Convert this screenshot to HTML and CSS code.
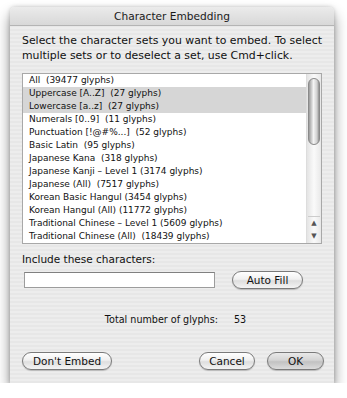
FILE: index.html
```html
<!DOCTYPE html>
<html lang="en">

<head>
  <meta charset="UTF-8" />
  <meta name="viewport" content="width=device-width, initial-scale=1.0" />
  <title>Character Embedding</title>
  <link rel="stylesheet" href="styles.css">
</head>

<body>
  <div class="dialog">
    <div class="titlebar">Character Embedding</div>
    <div class="content">
      <p class="intro">Select the character sets you want to embed. To select<br>multiple sets or to deselect a set, use Cmd+click.</p>

      <div class="listbox">
        <ul class="sets">
          <li>All&nbsp; (39477 glyphs)</li>
          <li class="selected">Uppercase [A..Z]&nbsp; (27 glyphs)</li>
          <li class="selected">Lowercase [a..z]&nbsp; (27 glyphs)</li>
          <li>Numerals [0..9]&nbsp; (11 glyphs)</li>
          <li>Punctuation [!@#%...]&nbsp; (52 glyphs)</li>
          <li>Basic Latin&nbsp; (95 glyphs)</li>
          <li>Japanese Kana&nbsp; (318 glyphs)</li>
          <li>Japanese Kanji – Level 1 (3174 glyphs)</li>
          <li>Japanese (All)&nbsp; (7517 glyphs)</li>
          <li>Korean Basic Hangul (3454 glyphs)</li>
          <li>Korean Hangul (All) (11772 glyphs)</li>
          <li>Traditional Chinese – Level 1 (5609 glyphs)</li>
          <li>Traditional Chinese (All)&nbsp; (18439 glyphs)</li>
        </ul>
        <div class="scrollbar">
          <div class="thumb"></div>
          <div class="track"></div>
          <div class="arrows">
            <span>▲</span>
            <span>▼</span>
          </div>
        </div>
      </div>

      <p class="label">Include these characters:</p>
      <div class="include-row">
        <div class="field"></div>
        <button class="aqua autofill">Auto Fill</button>
      </div>

      <div class="total">
        <span>Total number of glyphs:</span>
        <span class="count">53</span>
      </div>

      <div class="actions">
        <button class="aqua dont">Don't Embed</button>
        <div class="right-buttons">
          <button class="aqua cancel">Cancel</button>
          <button class="aqua ok">OK</button>
        </div>
      </div>
    </div>
  </div>
</body>

</html>
```

FILE: styles.css
```css
* {
  box-sizing: border-box;
}

body {
  margin: 0;
  background: #fff;
  font-family: "DejaVu Sans", "Noto Sans", sans-serif;
  color: #111;
}

.dialog {
  width: 324px;
  height: 376px;
  margin: 7px 0 0 10px;
  border-radius: 5px 5px 0 0;
  background: repeating-linear-gradient(#ededed 0, #ededed 2px, #e7e7e7 2px, #e7e7e7 4px);
  box-shadow: 0 8px 14px rgba(0, 0, 0, 0.45), 0 0 4px rgba(0, 0, 0, 0.2);
  display: flex;
  flex-direction: column;
}

.titlebar {
  height: 19px;
  border-radius: 5px 5px 0 0;
  background: linear-gradient(#ebebeb, #d8d8d8);
  border-bottom: 1px solid #b4b4b4;
  text-align: center;
  font-size: 10.6px;
  line-height: 18px;
  color: #1a1a1a;
}

.content {
  padding: 7px 10px 0 12px;
  display: flex;
  flex-direction: column;
}

.intro {
  margin: 0;
  font-size: 10.9px;
  line-height: 15px;
  white-space: nowrap;
}

.listbox {
  margin: 10px 2px 0 0;
  height: 171px;
  border: 1px solid #a8a8a8;
  background: #fff;
  display: flex;
}

.sets {
  margin: 0;
  padding: 0;
  list-style: none;
  flex: 1;
}

.sets li {
  height: 13px;
  line-height: 13px;
  font-size: 9px;
  padding-left: 6px;
  white-space: nowrap;
  overflow: hidden;
}

.sets li.selected {
  background: #d6d6d6;
}

.scrollbar {
  width: 15px;
  border-left: 1px solid #ddd;
  background: linear-gradient(90deg, #e4e4e4, #fafafa 50%, #e8e8e8);
  display: flex;
  flex-direction: column;
  padding: 4px 1px 0 1px;
}

.thumb {
  height: 67px;
  border-radius: 6px;
  border: 1px solid #8a8a8a;
  background: linear-gradient(90deg, #9a9a9a, #f4f4f4 45%, #cfcfcf 80%, #8e8e8e);
}

.track {
  flex: 1;
}

.arrows {
  display: flex;
  flex-direction: column;
  font-size: 7px;
  color: #555;
  text-align: center;
  border-top: 1px solid #ccc;
}

.arrows span {
  height: 13px;
  line-height: 13px;
}

.label {
  margin: 8px 0 0 0;
  font-size: 10.5px;
  line-height: 14px;
}

.include-row {
  margin-top: 5px;
  display: flex;
  align-items: center;
}

.field {
  width: 191px;
  height: 16px;
  margin-left: 2px;
  background: #fff;
  border: 1px solid #9c9c9c;
  border-top-color: #808080;
}

.aqua {
  appearance: none;
  height: 18px;
  padding: 0;
  border: 1px solid #7a7a7a;
  border-radius: 9px;
  background: linear-gradient(#ffffff, #f0f0f0 45%, #dedede 55%, #f4f4f4);
  box-shadow: 0 1px 1px rgba(0, 0, 0, 0.2);
  font-family: "DejaVu Sans", "Noto Sans", sans-serif;
  font-size: 10.5px;
  line-height: 16px;
  color: #111;
}

.autofill {
  width: 71px;
  margin-left: 17px;
}

.total {
  margin-top: 24px;
  display: flex;
  justify-content: center;
  gap: 16px;
  font-size: 9.6px;
  line-height: 14px;
  padding-left: 5px;
}

.actions {
  margin-top: 25px;
  display: flex;
  justify-content: space-between;
}

.dont {
  width: 90px;
}

.right-buttons {
  display: flex;
  gap: 12px;
}

.cancel {
  width: 56px;
}

.ok {
  width: 57px;
  background: linear-gradient(#e9e9e9, #d4d4d4 45%, #c2c2c2 55%, #dcdcdc);
}
```
